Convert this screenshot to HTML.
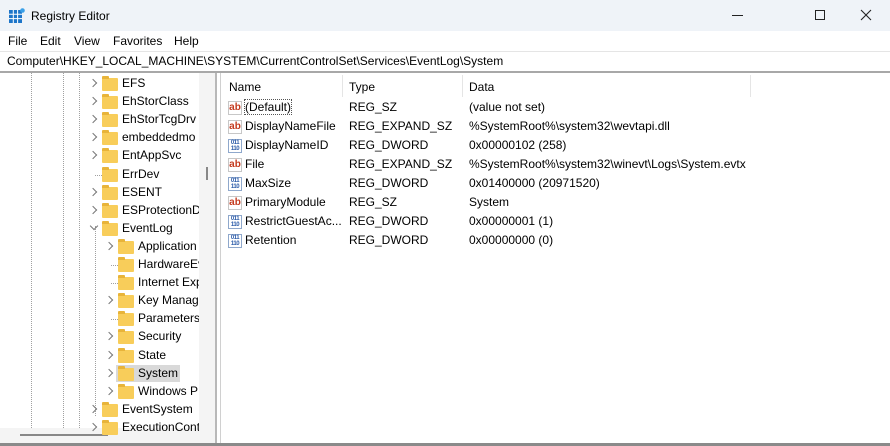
<!DOCTYPE html>
<html><head><meta charset="utf-8"><style>
*{margin:0;padding:0;box-sizing:border-box}
body{width:890px;height:446px;overflow:hidden;background:#fff;font-family:"Liberation Sans",sans-serif;font-size:12px;color:#000;position:relative}
.a{position:absolute;white-space:nowrap}
.title{left:0;top:0;width:890px;height:31px;background:#eff3f8}
.menu{left:0;top:31px;width:890px;height:20px;background:#fff}
.addr{left:0;top:51px;width:890px;height:20px;background:#fff;border-top:1px solid #e5e5e5}
.sep{left:0;top:71px;width:890px;height:2px;background:#a8a8a8}
.vl{position:absolute;top:73px;height:355px;border-left:1px dotted #a0a0a0;width:0}
.fold{position:absolute;width:16px;height:13px;background:#f8cd5a;border-radius:1px}
.fold:before{content:"";position:absolute;left:0;top:-2px;width:7px;height:3px;background:#e8b43a;border-radius:1px 1px 0 0}
.chev{position:absolute;width:6px;height:6px;border-right:1px solid #777;border-bottom:1px solid #777;transform:rotate(-45deg)}
.ab{position:absolute;width:14px;height:14px;border:1px solid #c7c7c7;background:#fff;color:#c43a1e;font-weight:bold;font-size:10px;line-height:11px;text-align:center}
.bin{position:absolute;width:14px;height:14px;border:1px solid #8fa8cc;background:#fff;color:#2a5aa8;font-weight:bold;font-size:6px;line-height:6px;text-align:center;letter-spacing:-0.5px}
</style></head><body>
<div class="a title"></div>
<svg class="a" style="left:9px;top:8px" width="16" height="16"><rect x="0" y="2" width="13" height="13" fill="#1d75c9"/><path d="M0 6.3h13M0 10.6h13M4.3 2v13M8.6 2v13" stroke="#fff" stroke-width="1"/><circle cx="13.5" cy="2.5" r="2.3" fill="#3aa0e8"/></svg>
<div class="a" style="left:31px;top:9px;font-size:12px">Registry Editor</div>
<div class="a" style="left:732px;top:15px;width:11px;height:1px;background:#222"></div>
<div class="a" style="left:815px;top:10px;width:10px;height:10px;border:1px solid #222"></div>
<svg class="a" style="left:860px;top:9px" width="12" height="12"><path d="M1 1L11 11M11 1L1 11" stroke="#222" stroke-width="1.1"/></svg>
<div class="a menu"></div>
<div class="a" style="left:8px;top:34px">File</div>
<div class="a" style="left:40px;top:34px">Edit</div>
<div class="a" style="left:74px;top:34px">View</div>
<div class="a" style="left:113px;top:34px">Favorites</div>
<div class="a" style="left:174px;top:34px">Help</div>
<div class="a addr"></div>
<div class="a" style="left:7px;top:54px">Computer\HKEY_LOCAL_MACHINE\SYSTEM\CurrentControlSet\Services\EventLog\System</div>
<div class="a sep"></div>
<div class="vl" style="left:31px"></div><div class="vl" style="left:63px"></div><div class="vl" style="left:79px"></div>
<div class="a" style="left:95px;top:226px;width:0;height:190px;border-left:1px dotted #a0a0a0"></div>
<div class="a" style="left:199px;top:73px;width:16px;height:355px;background:#f4f4f4"></div>
<div class="a" style="left:206px;top:167px;width:2px;height:13px;background:#888"></div>
<div class="a" style="left:215px;top:73px;width:2px;height:371px;background:#b8b8b8"></div>
<div class="a" style="left:220px;top:73px;width:1px;height:371px;background:#d0d0d0"></div>
<div class="a" style="left:0;top:428px;width:215px;height:16px;background:#f4f4f4"></div>
<div class="a" style="left:20px;top:434px;width:88px;height:2px;background:#888"></div>
<div class="a" style="left:0;top:443px;width:890px;height:3px;background:#8a8a8a"></div>
<div id="tree"></div>
<div class="a" style="left:342px;top:75px;width:1px;height:22px;background:#e5e5e5"></div>
<div class="a" style="left:462px;top:75px;width:1px;height:22px;background:#e5e5e5"></div>
<div class="a" style="left:750px;top:75px;width:1px;height:22px;background:#e5e5e5"></div>
<div class="a" style="left:229px;top:80px">Name</div>
<div class="a" style="left:349px;top:80px">Type</div>
<div class="a" style="left:469px;top:80px">Data</div>
<div id="vals"></div>
<script>
var t=[[1,1,"EFS"],[1,1,"EhStorClass"],[1,1,"EhStorTcgDrv"],[1,1,"embeddedmo"],[1,1,"EntAppSvc"],[1,0,"ErrDev"],[1,1,"ESENT"],[1,1,"ESProtectionD"],[1,2,"EventLog"],[2,1,"Application"],[2,0,"HardwareEv"],[2,0,"Internet Exp"],[2,1,"Key Manag"],[2,0,"Parameters"],[2,1,"Security"],[2,1,"State"],[2,1,"System"],[2,1,"Windows P"],[1,1,"EventSystem"],[1,1,"ExecutionCont"]];
var h="";t.forEach(function(r,i){var y=76+i*18.1,fx=r[0]==1?102:118,tx=fx+20,cx=r[0]==1?90:106;
if(r[1]==1)h+='<div class="chev" style="left:'+cx+'px;top:'+(y+4)+'px"></div>';
else if(r[1]==2)h+='<div class="chev" style="left:'+(cx+1)+'px;top:'+(y+2)+'px;transform:rotate(45deg)"></div>';
else h+='<div class="a" style="left:'+(cx+5)+'px;top:'+(y+8)+'px;width:'+(fx-cx-5)+'px;border-top:1px dotted #a0a0a0"></div>';
if(r[2]=="System")h+='<div class="a" style="left:116px;top:'+(y-1)+'px;width:64px;height:17px;background:#d9d9d9"></div>';
h+='<div class="fold" style="left:'+fx+'px;top:'+(y+2)+'px"></div><div class="a" style="left:'+tx+'px;top:'+y+'px;width:'+(199-tx)+'px;overflow:hidden">'+r[2]+'</div>';});
document.getElementById("tree").innerHTML=h;
var v=[["a","(Default)","REG_SZ","(value not set)"],["a","DisplayNameFile","REG_EXPAND_SZ","%SystemRoot%\\system32\\wevtapi.dll"],["b","DisplayNameID","REG_DWORD","0x00000102 (258)"],["a","File","REG_EXPAND_SZ","%SystemRoot%\\system32\\winevt\\Logs\\System.evtx"],["b","MaxSize","REG_DWORD","0x01400000 (20971520)"],["a","PrimaryModule","REG_SZ","System"],["b","RestrictGuestAc...","REG_DWORD","0x00000001 (1)"],["b","Retention","REG_DWORD","0x00000000 (0)"]];
h="";v.forEach(function(r,i){var y=100+i*19;
h+=r[0]=="a"?'<div class="ab" style="left:228px;top:'+(y+1)+'px">ab</div>':'<div class="bin" style="left:228px;top:'+(y+1)+'px">011<br>110</div>';
h+='<div class="a" style="left:245px;top:'+y+'px'+(i==0?';outline:1px dotted #555;outline-offset:0':'')+'">'+r[1]+'</div><div class="a" style="left:349px;top:'+y+'px">'+r[2]+'</div><div class="a" style="left:469px;top:'+y+'px">'+r[3]+'</div>';});
document.getElementById("vals").innerHTML=h;
</script>
</body></html>
